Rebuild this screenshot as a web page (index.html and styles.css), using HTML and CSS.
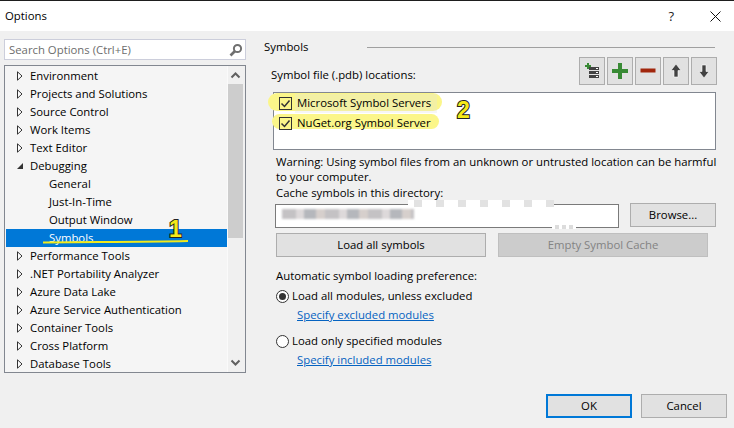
FILE: index.html
```html
<!DOCTYPE html>
<html lang="en">
<head>
<meta charset="utf-8">
<title>Options</title>
<link rel="stylesheet" href="styles.css">
</head>
<body>
<header class="titlebar">
  <span class="title">Options</span>
  <span class="help">?</span>
  <svg class="close" width="11" height="11" viewBox="0 0 11 11"><path d="M.5.500l10 10M10.500.500l-10 10" stroke="#111" stroke-width="1" fill="none"/></svg>
</header>
<main class="main">
  <section class="left">
    <div class="search">
      <span class="search-text">Search Options (Ctrl+E)</span>
      <svg width="14" height="14" viewBox="0 0 14 14"><circle cx="8.500" cy="5.500" r="3.600" fill="none" stroke="#707070" stroke-width="2"/><path d="M6 8l-4.500 4.500" stroke="#707070" stroke-width="2.600"/></svg>
    </div>
    <div class="tree">
      <div class="rows">
        <div class="row"><svg class="tw" width="6" height="10" viewBox="0 0 6 10"><path d="M.5.8v8.4L5 5z" fill="#fff" stroke="#333"/></svg>Environment</div>
        <div class="row"><svg class="tw" width="6" height="10" viewBox="0 0 6 10"><path d="M.5.8v8.4L5 5z" fill="#fff" stroke="#333"/></svg>Projects and Solutions</div>
        <div class="row"><svg class="tw" width="6" height="10" viewBox="0 0 6 10"><path d="M.5.8v8.4L5 5z" fill="#fff" stroke="#333"/></svg>Source Control</div>
        <div class="row"><svg class="tw" width="6" height="10" viewBox="0 0 6 10"><path d="M.5.8v8.4L5 5z" fill="#fff" stroke="#333"/></svg>Work Items</div>
        <div class="row"><svg class="tw" width="6" height="10" viewBox="0 0 6 10"><path d="M.5.8v8.4L5 5z" fill="#fff" stroke="#333"/></svg>Text Editor</div>
        <div class="row"><svg class="tw" width="6" height="10" viewBox="0 0 6 10"><path d="M0 8h6V2z" fill="#333"/></svg>Debugging</div>
        <div class="row child">General</div>
        <div class="row child">Just-In-Time</div>
        <div class="row child">Output Window</div>
        <div class="row child selected">Symbols</div>
        <div class="row"><svg class="tw" width="6" height="10" viewBox="0 0 6 10"><path d="M.5.8v8.4L5 5z" fill="#fff" stroke="#333"/></svg>Performance Tools</div>
        <div class="row"><svg class="tw" width="6" height="10" viewBox="0 0 6 10"><path d="M.5.8v8.4L5 5z" fill="#fff" stroke="#333"/></svg>.NET Portability Analyzer</div>
        <div class="row"><svg class="tw" width="6" height="10" viewBox="0 0 6 10"><path d="M.5.8v8.4L5 5z" fill="#fff" stroke="#333"/></svg>Azure Data Lake</div>
        <div class="row"><svg class="tw" width="6" height="10" viewBox="0 0 6 10"><path d="M.5.8v8.4L5 5z" fill="#fff" stroke="#333"/></svg>Azure Service Authentication</div>
        <div class="row"><svg class="tw" width="6" height="10" viewBox="0 0 6 10"><path d="M.5.8v8.4L5 5z" fill="#fff" stroke="#333"/></svg>Container Tools</div>
        <div class="row"><svg class="tw" width="6" height="10" viewBox="0 0 6 10"><path d="M.5.8v8.4L5 5z" fill="#fff" stroke="#333"/></svg>Cross Platform</div>
        <div class="row"><svg class="tw" width="6" height="10" viewBox="0 0 6 10"><path d="M.5.8v8.4L5 5z" fill="#fff" stroke="#333"/></svg>Database Tools</div>
      </div>
      <div class="scrollbar">
        <svg class="sb-arrow" width="17" height="17" viewBox="0 0 17 17"><path d="M4.500 11L8.500 7l4 4" fill="none" stroke="#606060" stroke-width="2"/></svg>
        <div class="thumb"></div>
        <svg class="sb-arrow sb-down" width="17" height="17" viewBox="0 0 17 17"><path d="M4.500 6l4 4 4-4" fill="none" stroke="#606060" stroke-width="2"/></svg>
      </div>
      <svg class="mark-line" width="160" height="6" viewBox="0 0 160 6"><path d="M1 3.400C50 2.800 100 3.200 146 2" fill="none" stroke="#f2ea1c" stroke-width="2"/></svg>
      <span class="mark-num mark-one">1</span>
    </div>
  </section>
  <section class="right">
    <div class="section-head"><span class="section-name">Symbols</span><div class="rule"></div></div>
    <div class="toolrow">
      <span class="toolrow-label">Symbol file (.pdb) locations:</span>
      <div class="tools">
        <button class="tool"><svg width="26" height="28" viewBox="0 0 26 28"><path d="M6 8h6v2H6zM8 6h2v6H8z" fill="#388a34"/><path d="M10 10h10v3H10zM10 14h10v3H10zM10 18h10v3H10z" fill="#424242"/><path d="M17 11h2v1h-2zM17 15h2v1h-2zM17 19h2v1h-2z" fill="#fff"/></svg></button>
        <button class="tool"><svg width="26" height="28" viewBox="0 0 26 28"><path d="M11 6h4v6h6v4h-6v6h-4v-6H5v-4h6z" fill="#388a34"/></svg></button>
        <button class="tool"><svg width="26" height="28" viewBox="0 0 26 28"><path d="M5.500 11.500h15v4h-15z" fill="#a1260d"/></svg></button>
        <button class="tool"><svg width="26" height="28" viewBox="0 0 26 28"><path d="M13 7l5 6.500h-3V20h-4v-6.500H8z" fill="#424242" stroke="#fff" stroke-width=".6"/></svg></button>
        <button class="tool"><svg width="26" height="28" viewBox="0 0 26 28"><path d="M13 21l-5-6.500h3V8h4v6.500h3z" fill="#424242" stroke="#fff" stroke-width=".6"/></svg></button>
      </div>
    </div>
    <div class="listbox">
      <div class="highlight hl-one"></div>
      <div class="highlight hl-two"></div>
      <div class="patch"></div>
      <label class="check-row"><span class="check"><svg width="13" height="13" viewBox="0 0 13 13"><path d="M2.500 6.500l3 3 5-6" fill="none" stroke="#333" stroke-width="1.500"/></svg></span>Microsoft Symbol Servers</label>
      <label class="check-row"><span class="check"><svg width="13" height="13" viewBox="0 0 13 13"><path d="M2.500 6.500l3 3 5-6" fill="none" stroke="#333" stroke-width="1.500"/></svg></span>NuGet.org Symbol Server</label>
      <span class="mark-num mark-two">2</span>
    </div>
    <p class="warning">Warning: Using symbol files from an unknown or untrusted location can be harmful to your computer.</p>
    <div class="cache-label">Cache symbols in this directory:</div>
    <div class="cache-row">
      <div class="cache-input">
        <div class="smudge smudge-a"></div>
        <div class="smudge smudge-b"></div>
        <div class="smudge smudge-c"></div>
      </div>
      <button class="btn browse">Browse...</button>
    </div>
    <div class="action-row">
      <button class="btn action">Load all symbols</button>
      <button class="btn action disabled">Empty Symbol Cache</button>
    </div>
    <div class="pref-label">Automatic symbol loading preference:</div>
    <label class="radio-row"><span class="radio on"></span>Load all modules, unless excluded</label>
    <a class="link" href="#">Specify excluded modules</a>
    <label class="radio-row second"><span class="radio"></span>Load only specified modules</label>
    <a class="link" href="#">Specify included modules</a>
  </section>
</main>
<footer class="footer">
  <button class="btn foot primary">OK</button>
  <button class="btn foot">Cancel</button>
</footer>
</body>
</html>
```
FILE: styles.css
```css
* { box-sizing: border-box; }
html, body { margin: 0; padding: 0; }
body {
  width: 734px;
  height: 428px;
  overflow: hidden;
  display: flex;
  flex-direction: column;
  background: #f0f0f0;
  color: #000;
  font-family: "Open Sans", "Noto Sans", sans-serif;
  font-size: 11.35px;
  line-height: 16px;
}
.titlebar {
  flex: none;
  height: 31px;
  display: flex;
  align-items: center;
  background: #fff;
  border-top: 1px solid #1e1e1e;
  padding: 0 13px 0 5px;
}
.title { flex: 1; }
.help { font-size: 13px; margin-right: 36px; color: #222; }
.close { display: block; }
.main { flex: 1; display: flex; min-height: 0; }
.left { width: 264px; padding: 8px 18px 0 4px; flex: none; }
.search {
  height: 21px;
  display: flex;
  align-items: center;
  justify-content: space-between;
  background: #fff;
  border: 1px solid #cccedb;
  padding: 0 2px 0 4px;
}
.search-text { color: #6d6d6d; }
.tree {
  position: relative;
  margin-top: 5px;
  height: 308px;
  display: flex;
  background: #f5f5f5;
  border: 1px solid #828790;
}
.rows { flex: 1; padding: 1px 0 0 1px; overflow: hidden; min-width: 0; }
.row {
  height: 18px;
  line-height: 18px;
  padding-left: 11px;
  display: flex;
  align-items: center;
  white-space: nowrap;
}
.tw { flex: none; margin-right: 7px; display: block; }
.child { padding-left: 43px; }
.selected { background: #0078d7; color: #fff; }
.scrollbar {
  width: 18px;
  flex: none;
  display: flex;
  flex-direction: column;
  background: #f0f0f0;
  border-left: 1px solid #fafafa;
}
.sb-arrow { flex: none; display: block; height: 18px; margin-left: -1px; }
.thumb { height: 154px; width: 15px; background: #cdcdcd; }
.sb-down { margin-top: auto; }
.mark-line { position: absolute; left: 37px; top: 173px; }
.mark-num {
  position: absolute;
  font-family: "Liberation Sans", sans-serif;
  font-weight: 700;
  font-size: 23px;
  line-height: 23px;
  color: #f5ea1a;
  -webkit-text-stroke: 2px #222;
  paint-order: stroke fill;
}
.mark-one { left: 164px; top: 152px; }
.mark-two { left: 183px; top: 6px; }
.right { flex: 1; min-width: 0; padding-top: 8px; }
.section-head { display: flex; align-items: center; height: 16px; }
.section-name { width: 103px; flex: none; }
.rule { width: 348px; height: 1px; background: #a0a0a0; }
.toolrow {
  display: flex;
  justify-content: space-between;
  align-items: flex-end;
  height: 28px;
  margin-top: 2px;
  padding-left: 7px;
  width: 453px;
}
.toolrow-label { padding-bottom: 2px; }
.tools { display: flex; gap: 2px; }
.tool {
  width: 26px;
  height: 28px;
  padding: 0;
  border: 1px solid #adadad;
  background: #e1e1e1;
  display: block;
}
.tool svg { display: block; margin: -1px; }
.listbox {
  position: relative;
  margin: 7px 0 0 9px;
  width: 443px;
  height: 58px;
  background: #fff;
  border: 1px solid #828790;
  padding-top: 1px;
}
.highlight { position: absolute; background: #fbf68a; border-radius: 9px; }
.hl-one { left: -6px; top: 0; width: 174px; height: 18px; }
.hl-two { left: -2px; top: 21px; width: 167px; height: 15px; }
.patch { position: absolute; left: 21px; top: 1px; width: 142px; height: 19px; background: rgba(225, 225, 225, 0.3); }
.check-row {
  position: relative;
  display: flex;
  align-items: center;
  height: 18px;
  margin-bottom: 2px;
  padding-left: 5px;
}
.check {
  width: 13px;
  height: 13px;
  margin-right: 5px;
  border: 1px solid #333;
  display: block;
  flex: none;
}
.check svg { display: block; margin: -1px; }
.warning { margin: 4px 0 0 12px; width: 446px; line-height: 15px; }
.cache-label { margin-left: 12px; margin-top: 1px; height: 18px; line-height: 16px; }
.cache-row { display: flex; margin-left: 11px; align-items: flex-start; width: 441px; justify-content: space-between; }
.cache-input {
  position: relative;
  width: 344px;
  height: 24px;
  margin-top: 1px;
  background: #fff;
  border: 1px solid #7a7a7a;
}
.smudge { position: absolute; }
.smudge-a {
  left: 6px;
  top: 4px;
  width: 132px;
  height: 10px;
  filter: blur(1.2px);
  background: repeating-linear-gradient(90deg, #c4c2c4 0 14px, #ddd9da 14px 22px, #b5b7bc 22px 34px, #d6cfcc 34px 43px);
}
.smudge-b {
  left: 132px;
  top: -5px;
  width: 146px;
  height: 7px;
  background: repeating-linear-gradient(90deg, #fff 0 6px, #e2e2e2 6px 14px, #fff 14px 22px);
}
.smudge-c { left: 276px; top: 20px; width: 24px; height: 4px; background: repeating-linear-gradient(90deg, #fff 0 3px, #dcdcdc 3px 7px); }
.btn {
  font: inherit;
  color: #000;
  background: #e1e1e1;
  border: 1px solid #adadad;
  padding: 0;
  height: 24px;
}
.browse { width: 86px; }
.action-row { display: flex; gap: 12px; margin: 5px 0 0 12px; }
.action { width: 210px; }
.disabled { background: #cccccc; color: #838383; border-color: #bfbfbf; }
.pref-label { margin: 11px 0 0 12px; }
.radio-row { display: flex; align-items: center; height: 16px; margin: 4px 0 0 12px; }
.second { margin-top: 10px; }
.radio {
  width: 13px;
  height: 13px;
  margin-right: 3px;
  border: 1px solid #333;
  border-radius: 50%;
  background: #fff;
  display: flex;
  align-items: center;
  justify-content: center;
  flex: none;
}
.on::after { content: ""; width: 7px; height: 7px; border-radius: 50%; background: #333; }
.link { display: block; margin: 3px 0 0 33px; color: #0563c1; height: 16px; }
.footer {
  flex: none;
  height: 34px;
  display: flex;
  justify-content: flex-end;
  gap: 9px;
  padding-right: 7px;
}
.foot { width: 86px; }
.primary { border: 2px solid #0078d7; }
```
